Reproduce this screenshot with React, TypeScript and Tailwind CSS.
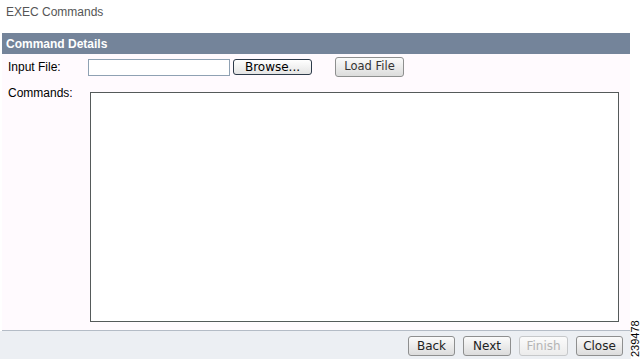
import React from "react";

const btn =
  "h-[20px] rounded-[3px] border border-[#8e8f8f] bg-gradient-to-b from-[#fbfbfb] to-[#dcdcdc] text-[12px] text-[#222] flex items-center justify-center";

const footer: [string, string][] = [
  ["Back", "w-[47px]"],
  ["Next", "w-[48px]"],
  ["Finish", "w-[49px]"],
  ["Close", "w-[47px]"],
];

export default function App() {
  return (
    <div
      className="w-[644px] h-[359px] flex bg-white overflow-hidden"
      style={{ fontFamily: '"Liberation Sans", Arial, sans-serif' }}
    >
      <div className="w-[631px] flex flex-col">
        <div className="h-[33px] pl-[6px] pt-[3px] text-[12px] text-[#555]">EXEC Commands</div>
        <div className="ml-[2px] w-[628px] h-[298px] flex flex-col bg-[#fffafe] border-b border-[#b4bcc6]">
          <div className="h-[21px] bg-[#74849a] flex items-center pl-[4px] text-[12px] font-bold text-white">
            Command Details
          </div>
          <div className="flex items-center h-[26px] pl-[6px]">
            <span className="w-[80px] text-[12px] text-black">Input File:</span>
            <div className="w-[142px] h-[17px] border border-[#8fa1b3] bg-white" />
            <div
              className="ml-[3px] w-[79px] h-[16px] rounded-[3px] border border-[#2d3a4a] bg-gradient-to-b from-white to-[#e4e4e4] text-black flex items-center justify-center"
              style={{ fontFamily: '"DejaVu Sans", sans-serif', fontSize: 12 }}
            >
              Browse...
            </div>
            <div
              className={`ml-[23px] w-[69px] ${btn} text-[#333]`}
              style={{ fontFamily: '"DejaVu Sans", sans-serif', fontSize: 11.5 }}
            >
              Load File
            </div>
          </div>
          <div className="flex pl-[6px] pt-[12px]">
            <span className="w-[82px] text-[12px] text-black -mt-[8px]">Commands:</span>
            <div className="w-[529px] h-[230px] border border-[#555a5a] bg-white" />
          </div>
        </div>
        <div className="flex-1 bg-[#eceff3] flex items-center justify-end gap-[8px] pr-[8px] pt-[2px]">
          {footer.map(([l, w]) => (
            <div
              key={l}
              className={`${w} ${btn} ${l === "Finish" ? "border-[#c6c8ca] from-[#f4f4f4] to-[#ececec] text-[#b4b4b4]" : ""}`}
              style={{ fontFamily: '"DejaVu Sans", sans-serif', fontSize: 12 }}
            >
              {l}
            </div>
          ))}
        </div>
      </div>
      <div className="flex-1 relative">
        <div
          className="absolute left-[0px] bottom-[2px] origin-bottom-left text-[11px] leading-none text-black whitespace-nowrap"
          style={{ transform: "rotate(-90deg) translate(0, 10px)" }}
        >
          239478
        </div>
      </div>
    </div>
  );
}
